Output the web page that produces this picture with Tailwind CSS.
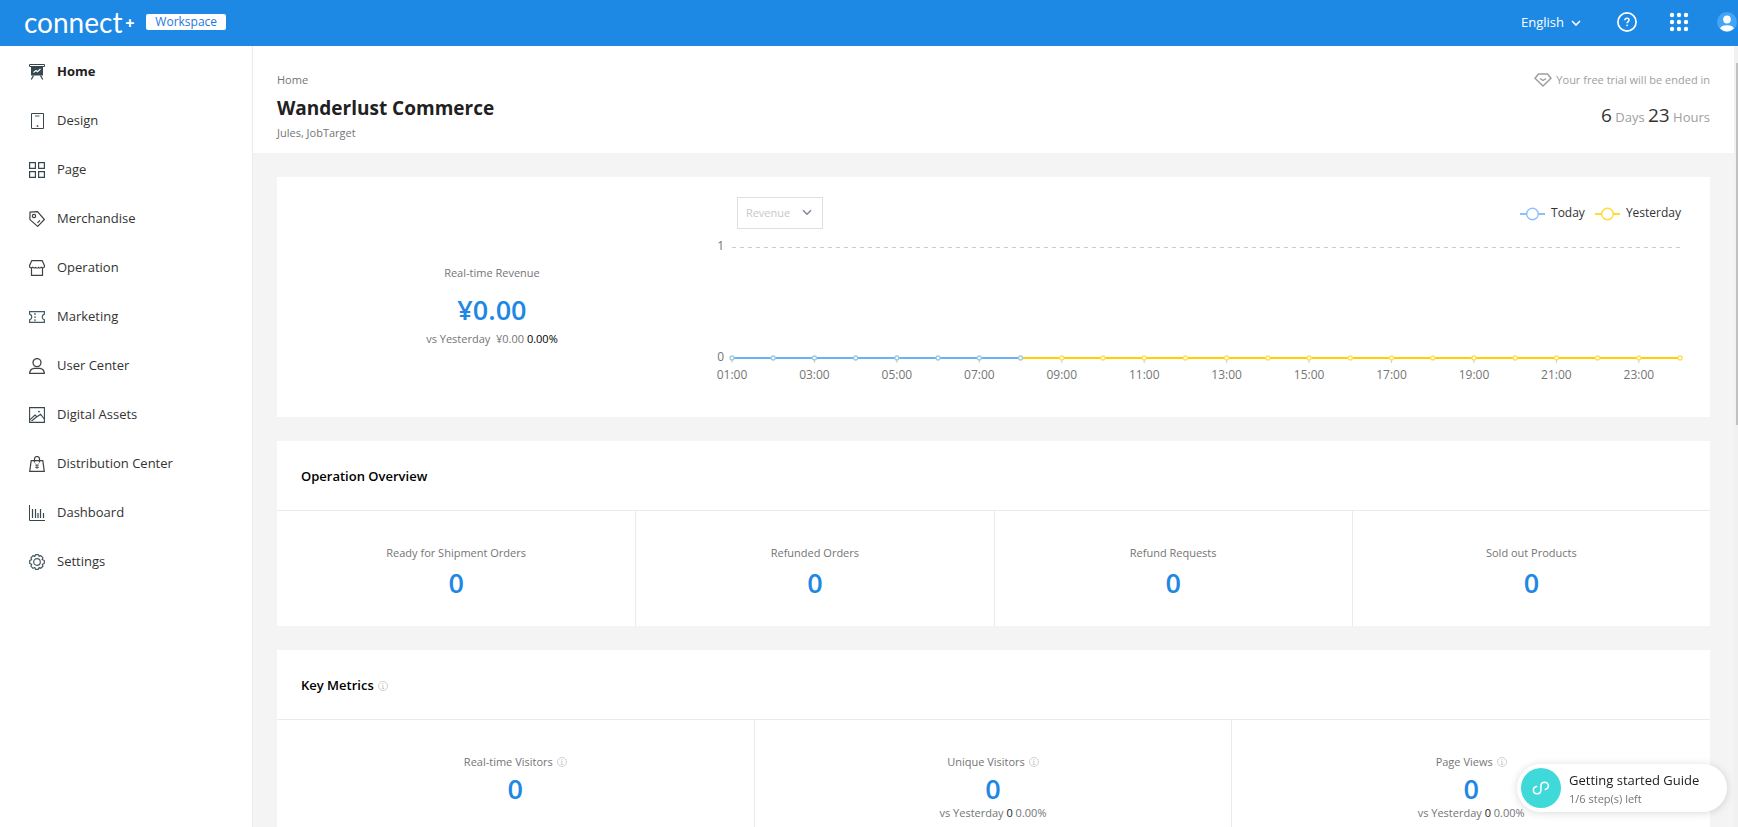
<!DOCTYPE html>
<html lang="en">
<head>
<meta charset="utf-8">
<meta name="viewport" content="width=device-width, initial-scale=1">
<title>Connect+ Workspace</title>
<script src="https://cdn.jsdelivr.net/npm/@tailwindcss/browser@4"></script>
</head>
<body class="flex h-screen flex-col overflow-hidden bg-[#f4f4f4] font-['Open_Sans','Noto_Sans',sans-serif] text-[11px] text-[#757575]">

<header class="flex h-[46px] shrink-0 items-center justify-between bg-[#1e88e5] pb-0.5 pl-6 text-white">
  <div class="flex items-center">
    <a href="#" class="flex items-center gap-0.5 font-['Lato',sans-serif] text-[28px] leading-8"><span>connect</span><span class="font-['Inter',sans-serif] text-base font-semibold">+</span></a>
    <span class="ml-[11px] flex h-4 w-20 items-center justify-center rounded-xs bg-white text-xs leading-4 text-[#1e78e0]">Workspace</span>
  </div>
  <div class="flex items-center">
    <div class="relative mr-9">
      <select aria-label="Language" class="w-[60px] appearance-none bg-transparent text-[13px] leading-5 outline-none"><option>English</option></select>
      <svg class="pointer-events-none absolute top-2 right-0" width="10" height="6" viewBox="0 0 10 6" fill="none" stroke="currentColor" stroke-width="1.6"><path d="M1 1l4 4 4-4"/></svg>
    </div>
    <button type="button" aria-label="Help" class="mr-8">
      <svg width="20" height="20" viewBox="0 0 20 20" fill="none" stroke="currentColor" stroke-width="1.7"><circle cx="10" cy="10" r="9.1"/><path d="M7.9 8.2c0-1.3.9-2 2.1-2s2.1.7 2.1 1.9c0 1.5-2 1.5-2 3.2" stroke-width="1.5"/><circle cx="10.1" cy="13.3" r=".9" fill="currentColor" stroke="none"/></svg>
    </button>
    <button type="button" aria-label="Applications" class="mr-7">
      <svg width="20" height="20" viewBox="0 0 20 20" fill="currentColor"><circle cx="3" cy="3" r="2.2"/><circle cx="10" cy="3" r="2.2"/><circle cx="17" cy="3" r="2.2"/><circle cx="3" cy="10" r="2.2"/><circle cx="10" cy="10" r="2.2"/><circle cx="17" cy="10" r="2.2"/><circle cx="3" cy="17" r="2.2"/><circle cx="10" cy="17" r="2.2"/><circle cx="17" cy="17" r="2.2"/></svg>
    </button>
    <button type="button" aria-label="Account" class="mr-px">
      <svg width="20" height="20" viewBox="0 0 20 20"><circle cx="10" cy="10" r="10" fill="#42a5f5"/><ellipse cx="10" cy="7.6" rx="3.8" ry="4" fill="#fff"/><path d="M3 16.6c.6-2.2 3.2-3.4 7-3.4s6.400 1.200 7 3.400a10 10 0 0 1-14 0z" fill="#fff"/></svg>
    </button>
  </div>
</header>

<div class="flex min-h-0 flex-1">
  <nav class="w-[253px] shrink-0 border-r border-[#e6ecf5] bg-white pt-px text-[13px] text-[#333]">
    <a href="#" class="flex h-[49px] items-center gap-3 pl-[29px] font-bold text-[#212121]">
      <svg width="16" height="16" viewBox="0 0 16 16" fill="none" stroke="#37474f"><path d="M.5.500h15v2H.500z"/><path d="M2 3h12v8.500H2z" fill="#37474f" stroke="none"/><path d="M4.500 8.500l2.500-2 1.500 1.200 3-2.700" stroke="#fff" stroke-width="1.200"/><path d="M4.500 11.500l-2.200 4M11.500 11.500l2.200 4" stroke-width="1.300"/></svg>
      Home</a>
    <a href="#" class="flex h-[49px] items-center gap-3 pl-[29px]">
      <svg width="16" height="16" viewBox="0 0 16 16" fill="none" stroke="#37474f"><path d="M2.500.500h12v15h-12z"/><path d="M6 3h4.500" stroke-width="1.600" stroke="#90989c"/><path d="M7.700 13h1.600" stroke-width="1.600"/></svg>
      Design</a>
    <a href="#" class="flex h-[49px] items-center gap-3 pl-[29px]">
      <svg width="16" height="16" viewBox="0 0 16 16" fill="none" stroke="#37474f" stroke-width="1.200"><path d="M.6.6h5.800v5.800H.6zM9.600.6h5.800v5.800H9.600zM.6 9.600h5.800v5.800H.6zM9.600 9.600h5.800v5.800H9.600z"/></svg>
      Page</a>
    <a href="#" class="flex h-[49px] items-center gap-3 pl-[29px]">
      <svg width="16" height="16" viewBox="0 0 16 16" fill="none" stroke="#424242" stroke-width="1.200"><path d="M1 1.200L8.500.600l6.900 7.900-6.700 6.900L.9 8.600z"/><circle cx="5" cy="5" r="1.700"/><path d="M11 9.300l-2.600 2.600"/></svg>
      Merchandise</a>
    <a href="#" class="flex h-[49px] items-center gap-3 pl-[29px]">
      <svg width="16" height="16" viewBox="0 0 16 16" fill="none" stroke="#424242" stroke-width="1.200"><path d="M2.800.600h10.400L15.400 5.500v1.300c-.3 1-2 1.300-3.100.5-1 .9-2 .9-2.800 0-.9.9-2.100.9-3 0-.8.900-1.800.900-2.800 0-1.100.8-2.800.5-3.100-.5V5.500z"/><path d="M2.500 8v7.400h11V8"/></svg>
      Operation</a>
    <a href="#" class="flex h-[49px] items-center gap-3 pl-[29px]">
      <svg width="16" height="16" viewBox="0 0 16 16" fill="none" stroke="#455a64" stroke-width="1.200"><path d="M.6 2.600h14.800v2.500c-1.600.6-2.200 1.500-2.200 2.900s.6 2.300 2.200 2.900v2.500H.6v-2.500C2.200 10.300 2.800 9.400 2.800 8S2.200 5.700.6 5.100z"/><path d="M6 4v2M6 7.200v1.800M6 10.200v2" /></svg>
      Marketing</a>
    <a href="#" class="flex h-[49px] items-center gap-3 pl-[29px]">
      <svg width="16" height="16" viewBox="0 0 16 16" fill="none" stroke="#424242" stroke-width="1.300"><circle cx="8" cy="4.600" r="4"/><path d="M.7 15.300c0-3 1.300-4.300 4.300-4.900h6c3 .6 4.300 1.900 4.300 4.900z"/></svg>
      User Center</a>
    <a href="#" class="flex h-[49px] items-center gap-3 pl-[29px]">
      <svg width="16" height="16" viewBox="0 0 16 16" fill="none" stroke="#37474f" stroke-width="1.100"><path d="M.6.600h14.800v14.800H.6z"/><path d="M.8 12.800L6 8l1.500 1.400M2.500 14l4-3.200 5.100-3.600 3.600 4.800"/><circle cx="10" cy="4.600" r=".9" fill="#37474f" stroke="none"/></svg>
      Digital Assets</a>
    <a href="#" class="flex h-[49px] items-center gap-3 pl-[29px]">
      <svg width="16" height="16" viewBox="0 0 16 16" fill="none" stroke="#424242" stroke-width="1.200"><path d="M2.200 4.600h11.600l1.500 10.800H.7z"/><path d="M5.500 6.500V3a2.500 2.500 0 0 1 5 0v3.500"/><path d="M6.300 7.500L8 9.500l1.700-2M8 9.500v3.500M6.200 9.800h3.600M6.200 11.500h3.600" stroke-width=".8"/></svg>
      Distribution Center</a>
    <a href="#" class="flex h-[49px] items-center gap-3 pl-[29px]">
      <svg width="16" height="16" viewBox="0 0 16 16" fill="none" stroke="#37474f"><path d="M.5 0v15.500H16"/><path d="M3.500 13V4M6.500 13V4M9 13V8M11.500 13V4M14.500 13V8" stroke-width="1.200"/></svg>
      Dashboard</a>
    <a href="#" class="flex h-[49px] items-center gap-3 pl-[29px]">
      <svg width="16" height="16" viewBox="0 0 16 16" fill="none" stroke="#455a64" stroke-width="1.200"><path d="M6.500.700h3l.6 1.700 1.700-.8 2.200 2.200-.9 1.700 2.200 1v3l-2 .8.700 1.900-2.200 2.100-1.700-.8-.9 1.900H6.600l-.8-1.900-1.800.8-2.100-2.200.8-1.700-2-.9v-3l1.900-.9-.7-1.800 2.100-2.200 1.800.8z" stroke-linejoin="round"/><circle cx="8" cy="8" r="3.300"/></svg>
      Settings</a>
  </nav>

  <main class="min-w-0 flex-1 overflow-hidden">
    <section class="flex h-[107px] justify-between bg-white px-6 pt-6">
      <div>
        <a href="#" class="block leading-5">Home</a>
        <h1 class="mt-0.5 text-[19px] leading-8 font-bold text-[#212121]">Wanderlust Commerce</h1>
        <p class="leading-[18px]">Jules, JobTarget</p>
      </div>
      <div class="text-right text-[#9e9e9e]">
        <p class="flex items-center justify-end gap-1 leading-5">
          <svg width="18" height="14" viewBox="0 0 18 14" fill="none" stroke="#9e9e9e" stroke-width="1.500" stroke-linejoin="round"><path d="M4.500 1h9L17 5.200 9 13 1 5.200z"/><path d="M6 5.500l3 2 3-2"/></svg>
          Your free trial will be ended in</p>
        <p class="mt-[9px] text-[13px] leading-8"><span class="text-[19px] text-[#333]">6</span> Days <span class="text-[19px] text-[#333]">23</span> Hours</p>
      </div>
    </section>

    <div class="flex flex-col gap-6 p-6">
      <section class="flex h-60 bg-white">
        <div class="flex w-[30%] flex-col items-center pt-[86px]">
          <h2 class="leading-5">Real-time Revenue</h2>
          <p class="mt-[7px] text-[27px] leading-10 font-semibold text-[#1e88e5]">¥0.00</p>
          <p class="leading-[18px]">vs Yesterday&nbsp; ¥0.00 <span class="text-black">0.00%</span></p>
        </div>
        <div class="w-[70%] pt-5">
          <div class="flex items-start justify-between pr-[29px] pl-[30px]">
            <div class="relative">
              <select aria-label="Metric" disabled class="h-8 w-[86px] appearance-none border border-[#dcdfe6] bg-white px-2 text-[#c8c8c8]"><option>Revenue</option></select>
              <svg class="pointer-events-none absolute top-3 right-[11px]" width="10" height="7" viewBox="0 0 10 7" fill="none" stroke="#80889c" stroke-width="1.500"><path d="M1 1.200l4 4 4-4"/></svg>
            </div>
            <div class="flex gap-[10px] text-xs text-[#333]">
              <span class="flex items-center gap-[6px] leading-8"><svg width="25" height="16" fill="none" stroke="#8cc1fb"><path d="M0 9h25" stroke-width="2"/><circle cx="12.500" cy="9" r="5.800" fill="#fff" stroke-width="1.400"/></svg>Today</span>
              <span class="flex items-center gap-[6px] leading-8"><svg width="25" height="16" fill="none" stroke="#ffdb33"><path d="M0 9h25" stroke-width="2"/><circle cx="12.500" cy="9" r="5.800" fill="#fff" stroke-width="1.400"/></svg>Yesterday</span>
            </div>
          </div>
          <div class="pt-4 pr-[30px] pl-[25px]">
            <svg id="chart" class="h-36 w-full overflow-visible text-xs" fill="#757575" role="img" aria-label="Hourly revenue, today and yesterday"></svg>
          </div>
        </div>
      </section>

      <section class="bg-white">
        <h2 class="border-b border-[#ebebeb] px-6 pt-[25px] pb-[23px] text-[13px] leading-[21px] font-semibold text-black">Operation Overview</h2>
        <div class="grid grid-cols-4 text-center">
          <div class="h-[115px] pt-8"><h3 class="leading-5">Ready for Shipment Orders</h3><p class="text-[27px] leading-10 font-semibold text-[#1e88e5]">0</p></div>
          <div class="h-[115px] border-l border-[#ebebeb] pt-8"><h3 class="leading-5">Refunded Orders</h3><p class="text-[27px] leading-10 font-semibold text-[#1e88e5]">0</p></div>
          <div class="h-[115px] border-l border-[#ebebeb] pt-8"><h3 class="leading-5">Refund Requests</h3><p class="text-[27px] leading-10 font-semibold text-[#1e88e5]">0</p></div>
          <div class="h-[115px] border-l border-[#ebebeb] pt-8"><h3 class="leading-5">Sold out Products</h3><p class="text-[27px] leading-10 font-semibold text-[#1e88e5]">0</p></div>
        </div>
      </section>

      <section class="bg-white">
        <h2 class="flex items-center gap-1 border-b border-[#ebebeb] px-6 pt-[25px] pb-[23px] text-[13px] leading-[21px] font-semibold text-black">Key Metrics
          <svg width="10" height="10" viewBox="0 0 10 10" fill="none" stroke="#cfcfcf"><circle cx="5" cy="5" r="4.500"/><path d="M4 4h1v3.500M3.800 7.500h2.400M4.500 2.500h1"/></svg></h2>
        <div class="grid grid-cols-3 divide-x divide-[#ebebeb] text-center">
          <div class="h-[130px] pt-8"><h3 class="flex items-center justify-center gap-1 leading-5">Real-time Visitors <svg width="10" height="10" viewBox="0 0 10 10" fill="none" stroke="#cfcfcf"><circle cx="5" cy="5" r="4.500"/><path d="M4 4h1v3.500M3.800 7.500h2.400M4.500 2.500h1"/></svg></h3><p class="text-[27px] leading-[34px] font-semibold text-[#1e88e5]">0</p></div>
          <div class="h-[130px] pt-8"><h3 class="flex items-center justify-center gap-1 leading-5">Unique Visitors <svg width="10" height="10" viewBox="0 0 10 10" fill="none" stroke="#cfcfcf"><circle cx="5" cy="5" r="4.500"/><path d="M4 4h1v3.500M3.800 7.500h2.400M4.500 2.500h1"/></svg></h3><p class="text-[27px] leading-[34px] font-semibold text-[#1e88e5]">0</p><p class="leading-[14px]">vs Yesterday <span class="text-[#212121]">0</span> 0.00%</p></div>
          <div class="h-[130px] pt-8"><h3 class="flex items-center justify-center gap-1 leading-5">Page Views <svg width="10" height="10" viewBox="0 0 10 10" fill="none" stroke="#cfcfcf"><circle cx="5" cy="5" r="4.500"/><path d="M4 4h1v3.500M3.800 7.500h2.400M4.500 2.500h1"/></svg></h3><p class="text-[27px] leading-[34px] font-semibold text-[#1e88e5]">0</p><p class="leading-[14px]">vs Yesterday <span class="text-[#212121]">0</span> 0.00%</p></div>
        </div>
      </section>
    </div>
  </main>

  <div class="w-1 shrink-0 bg-[#f1f1f1] pt-[17px] pl-0.5" aria-hidden="true"><div class="h-[362px] bg-[#c1c1c1]"></div></div>
</div>

<button type="button" class="fixed right-[11px] bottom-[15px] flex h-12 w-[210px] items-center gap-2 rounded-full bg-white pl-1 text-left shadow-[0_1px_8px_rgba(0,0,0,0.15)]">
  <span class="flex size-10 shrink-0 items-center justify-center rounded-full bg-[#40d9d9]">
    <svg width="18" height="16" viewBox="0 0 18 16" fill="none" stroke="#fff" stroke-width="1.500" stroke-linecap="round"><path d="M4.600 6.600C2.600 7 1.300 8.500 1.400 10.400c.2 2.200 2 3.500 4 3.400 2.300-.1 3.400-1.700 3.500-3.700V6c0-2.200 1.500-3.700 3.600-3.800 2.200 0 3.900 1.600 3.900 3.600 0 1.800-1.300 3.300-3.200 3.600"/></svg>
  </span>
  <span class="whitespace-nowrap pt-0.5"><span class="block text-[13px] leading-5 text-[#212121]">Getting started Guide</span><span class="block text-[11px] leading-[18px]">1/6 step(s) left</span></span>
</button>

<script>
  // Hourly points: today runs to 08:00, yesterday covers the whole day.
  const top0 = 2, base = 113, n = 24, today = 8;
  const x = i => (i / (n - 1) * 100) + '%';
  let s = `<line x1="0" x2="100%" y1="${top0 + .5}" y2="${top0 + .5}" stroke="#ccc" stroke-dasharray="4 4"/>`;
  s += `<text x="-8" y="5" text-anchor="end">1</text><text x="-8" y="116" text-anchor="end">0</text>`;
  for (let i = 0; i < n; i += 2) {
    const h = String(i + 1).padStart(2, '0') + ':00';
    s += `<line x1="${x(i)}" x2="${x(i)}" y1="${base}" y2="${base + 5}" stroke="#ccc"/><text x="${x(i)}" y="${base + 21}" text-anchor="middle">${h}</text>`;
  }
  s += `<line x1="0" x2="100%" y1="${base}" y2="${base}" stroke="#ffd000" stroke-width="2"/>`;
  s += `<line x1="0" x2="${x(today - 1)}" y1="${base}" y2="${base}" stroke="#6bb1fa" stroke-width="2"/>`;
  for (let i = 0; i < n; i++)
    s += `<circle cx="${x(i)}" cy="${base}" r="2" fill="#fff" stroke="${i < today ? '#9dcbd8' : '#ffdf55'}" stroke-width="1.300"/>`;
  document.getElementById('chart').innerHTML = s;
</script>
</body>
</html>
